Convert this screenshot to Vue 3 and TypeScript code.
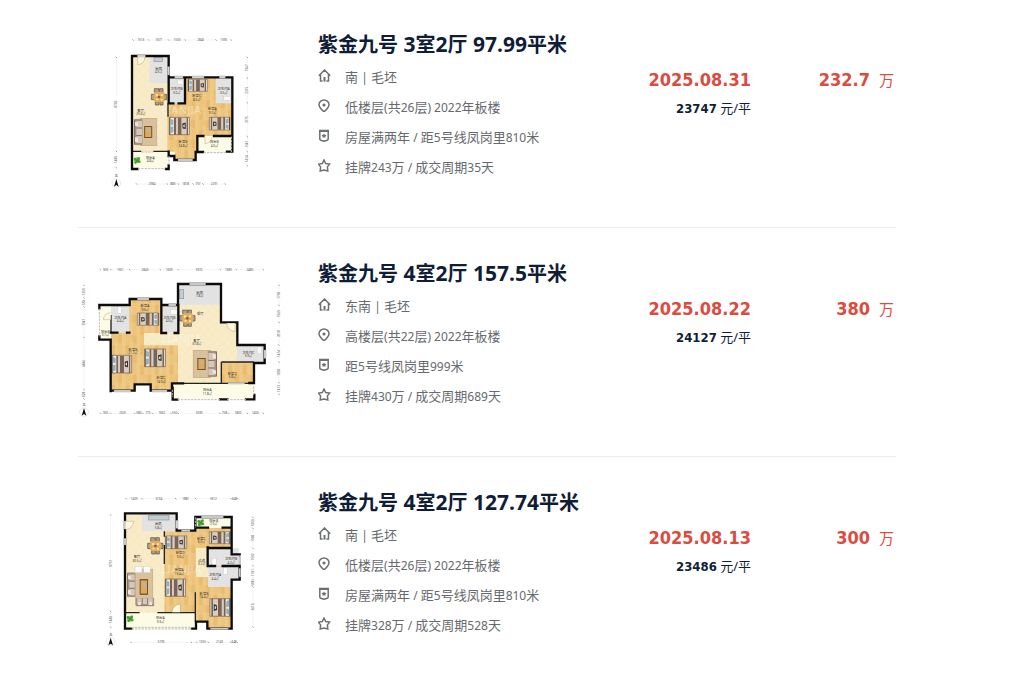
<script setup lang="ts">
type Box = [number, number, number, number]
type Placed = { x: number; y: number; w: number; h: number; turn?: number }
type Plan = {
  view: string
  floors: { kind: 'cream' | 'wood' | 'tile' | 'balcony'; d: string }[]
  walls: string
  thin: string
  windows: Box[]
  rails: string
  doors: string
  beds: Placed[]
  sofas: Placed[]
  rugs: Placed[]
  tables: { x: number; y: number }[]
  plants: { x: number; y: number }[]
  fixtures: Box[]
  stove: Box
  rooms: { x: number; y: number; name: string; area: string }[]
  top: { y: number; marks: number[]; text: string[] }
  bottom: { y: number; marks: number[]; text: string[] }
  left: { x: number; marks: number[]; text: string[] }
  right: { x: number; marks: number[]; text: string[] }
  compass: { x: number; y: number }
  brand: { x: number; y: number }
}
type Listing = {
  title: string
  facing: string
  floor: string
  place: string
  deal: string
  date: string
  unit: string
  price: string
  plan: Plan
}

const listings: Listing[] = [
  {
    title: '紫金九号 3室2厅 97.99平米',
    facing: '南 | 毛坯',
    floor: '低楼层(共26层) 2022年板楼',
    place: '房屋满两年 / 距5号线凤岗里810米',
    deal: '挂牌243万 / 成交周期35天',
    date: '2025.08.31',
    unit: '23747',
    price: '232.7',
    plan: {
      view: '0 21 660 510',
      floors: [
        { kind: 'cream', d: 'M162 108H272V395H162Z' },
        { kind: 'tile', d: 'M215 110H270V190H215Z' },
        { kind: 'wood', d: 'M270 172H462V348H360V395H352V420H290V395H268V250H270Z' },
        { kind: 'tile', d: 'M273 174H321V250H273ZM413 174H462V250H413Z' },
        { kind: 'balcony', d: 'M162 396H272V445H162ZM360 349H462V398H360Z' },
      ],
      walls: 'M178 447H162V108H272V172H463V395H447M272 395V408H289V420H353V396H375M272 436V447H264M321 174V250H302M286 250H272V174M358 396V348H376M408 348H462',
      thin: 'M162 394H190M226 394H272M270 250V290',
      windows: [[178, 105, 24, 7], [268, 140, 7, 25], [290, 168, 25, 7], [342, 168, 36, 7], [424, 168, 18, 7], [300, 417, 44, 6]],
      rails: 'M180 446H262M377 398H447M273 408V434M460 350V396M190 396H226',
      doors: 'M179 112V134Q199 132 201 112M381 350V371Q400 369 403 350',
      beds: [
        { x: 274, y: 292, w: 60, h: 52 },
        { x: 330, y: 178, w: 58, h: 36 },
        { x: 456, y: 330, w: 62, h: 38, turn: 180 },
      ],
      sofas: [{ x: 168, y: 296, w: 26, h: 80 }],
      rugs: [{ x: 185, y: 294, w: 53, h: 84 }],
      tables: [{ x: 243, y: 231 }],
      plants: [{ x: 177, y: 421 }],
      fixtures: [[298, 180, 17, 14], [437, 229, 21, 12]],
      stove: [228, 113, 25, 12],
      rooms: [
        { x: 242, y: 149, name: '厨房', area: '4.5㎡' },
        { x: 296, y: 211, name: '卫生间B', area: '3.0㎡' },
        { x: 356, y: 231, name: '卧室C', area: '8.3㎡' },
        { x: 437, y: 211, name: '卫生间A', area: '3.5㎡' },
        { x: 403, y: 270, name: '卧室A', area: '9.7㎡' },
        { x: 188, y: 275, name: '客厅', area: '25.6㎡' },
        { x: 315, y: 370, name: '卧室B', area: '14.8㎡' },
        { x: 409, y: 369, name: '阳台B', area: '4.0㎡' },
        { x: 217, y: 416, name: '阳台A', area: '4.8㎡' },
      ],
      top: { y: 60, marks: [165, 212, 272, 322, 414, 460], text: ['1513', '1677', '1503', '2840', '1390'] },
      bottom: { y: 492, marks: [176, 268, 301, 345, 375, 442], text: ['2984', '883', '1818', '757', '2291'] },
      left: { x: 115, marks: [112, 394, 443], text: ['8750', '1480'] },
      right: { x: 508, marks: [112, 174, 248, 350, 395, 437], text: ['1967', '2315', '3175', '1341', '1414'] },
      compass: { x: 115, y: 489 },
      brand: { x: 310, y: 283 },
    },
  },
  {
    title: '紫金九号 4室2厅 157.5平米',
    facing: '东南 | 毛坯',
    floor: '高楼层(共22层) 2022年板楼',
    place: '距5号线凤岗里999米',
    deal: '挂牌430万 / 成交周期689天',
    date: '2025.08.22',
    unit: '24127',
    price: '380',
    plan: {
      view: '0 3 660 510',
      floors: [
        { kind: 'wood', d: 'M98 152H155V132H250V234H302V407H218V388H170V408H98Z' },
        { kind: 'cream', d: 'M198 234H300V86H430V202H477V321H430V384H300V271H198Z' },
        { kind: 'tile', d: 'M302 88H427V149H302ZM98 153H154V233H98ZM250 153H300V233H250ZM477 270H558V321H477Z' },
        { kind: 'wood', d: 'M430 321H528V384H430Z' },
        { kind: 'balcony', d: 'M284 385H530V431H284ZM64 150H99V250H64Z' },
      ],
      walls: 'M98 408V254H64V244M64 160V150H155V132H250V150H300V87H429V202H478V270H560V324H528V384H514M98 407H170V388H218V407H282V385H315M284 398V434H298M426 433H448M504 433H529V420M99 233H118M147 233H154M250 150V234H264M290 234H301V150',
      thin: 'M99 180V235M430 321H528M430 321V384M315 385H514M528 321V384',
      windows: [[178, 129, 35, 6], [272, 147, 22, 6], [335, 84, 48, 6], [108, 405, 50, 6], [222, 405, 45, 6], [558, 285, 6, 25], [450, 382, 50, 5]],
      rails: 'M299 434H426M447 434H504M64 161V244M527 394V420M283 404V426',
      doors: 'M98 194H76Q78 174 98 173M471 205V230Q449 227 446 205',
      beds: [
        { x: 101, y: 301, w: 60, h: 53 },
        { x: 200, y: 282, w: 62, h: 53 },
        { x: 242, y: 211, w: 64, h: 37, turn: 180 },
      ],
      sofas: [{ x: 417, y: 367, w: 28, h: 80, turn: 180 }],
      rugs: [{ x: 344, y: 285, w: 55, h: 84 }],
      tables: [{ x: 328, y: 190 }],
      plants: [],
      fixtures: [[118, 155, 12, 21], [277, 163, 20, 15], [538, 276, 13, 20]],
      stove: [304, 104, 13, 27],
      rooms: [
        { x: 365, y: 116, name: '厨房', area: '7.8㎡' },
        { x: 201, y: 156, name: '卧室A', area: '9.6㎡' },
        { x: 127, y: 191, name: '卫生间A', area: '4.4㎡' },
        { x: 274, y: 191, name: '卫生间B', area: '4.0㎡' },
        { x: 367, y: 180, name: '餐厅', area: '' },
        { x: 82, y: 233, name: '阳台B', area: '3.7㎡' },
        { x: 356, y: 260, name: '客厅', area: '37.8㎡' },
        { x: 165, y: 287, name: '卧室B', area: '21.2㎡' },
        { x: 249, y: 373, name: '卧室C', area: '14.9㎡' },
        { x: 511, y: 296, name: '卫生间C', area: '3.9㎡' },
        { x: 463, y: 359, name: '卧室D', area: '5.8㎡' },
        { x: 388, y: 408, name: '阳台A', area: '11.8㎡' },
      ],
      top: { y: 44, marks: [67, 99, 155, 247, 300, 427, 475, 556], text: ['903', '1561', '2843', '1609', '3972', '1389', '2480'] },
      bottom: { y: 475, marks: [68, 98, 170, 195, 224, 279, 301, 426, 452, 508, 556], text: ['905', '2025', '580', '775', '1662', '550', '3939', '758', '1800', '1400'] },
      left: { x: 18, marks: [91, 129, 156, 247, 404, 432], text: ['1259', '559', '2947', '4846', '828'] },
      right: { x: 603, marks: [91, 151, 202, 270, 321, 383, 418], text: ['1790', '1569', '2018', '1414', '1890', '1413'] },
      compass: { x: 18, y: 471 },
      brand: { x: 310, y: 264 },
    },
  },
  {
    title: '紫金九号 4室2厅 127.74平米',
    facing: '南 | 毛坯',
    floor: '低楼层(共26层) 2022年板楼',
    place: '房屋满两年 / 距5号线凤岗里810米',
    deal: '挂牌328万 / 成交周期528天',
    date: '2025.08.13',
    unit: '23486',
    price: '300',
    plan: {
      view: '0 0 660 510',
      floors: [
        { kind: 'cream', d: 'M141 88H297V138H259V384H141Z' },
        { kind: 'tile', d: 'M192 90H296V138H192Z' },
        { kind: 'wood', d: 'M259 139H356V128H460V430H390V410H354V384H259Z' },
        { kind: 'cream', d: 'M354 189H391V276H354Z' },
        { kind: 'tile', d: 'M390 190H482V244H390ZM390 246H482V284H460V306H390Z' },
        { kind: 'balcony', d: 'M144 383H352V431H144ZM356 97H460V129H356Z' },
      ],
      walls: 'M160 431H141V85H296V137H352V96H461V208H485M485 242V284H461V431H388V410H354V431H342M389 189H461M389 187V243H411M434 243H482M357 128H390M434 128H460',
      thin: 'M141 383H185M238 383H352M259 139V155M259 180V237M352 322V410',
      windows: [[138, 108, 6, 24], [138, 160, 6, 20], [293, 106, 7, 24], [310, 134, 26, 6], [370, 93, 66, 6], [483, 214, 5, 24], [483, 250, 5, 26], [397, 429, 54, 5]],
      rails: 'M161 432H342M160 427H342M353 97V128',
      doors: 'M143 109H167Q164 132 143 134M307 382V357Q284 360 282 382',
      beds: [
        { x: 263, y: 153, w: 63, h: 38 },
        { x: 262, y: 282, w: 60, h: 52 },
        { x: 457, y: 176, w: 63, h: 36, turn: 180 },
        { x: 457, y: 394, w: 61, h: 53, turn: 180 },
      ],
      sofas: [
        { x: 147, y: 262, w: 25, h: 75 },
        { x: 173, y: 364, w: 26, h: 56, turn: -90 },
      ],
      rugs: [{ x: 171, y: 251, w: 55, h: 110 }],
      tables: [{ x: 232, y: 183 }],
      plants: [{ x: 156, y: 401 }, { x: 368, y: 113 }],
      fixtures: [[402, 220, 13, 23], [436, 248, 12, 20], [171, 244, 21, 19], [197, 244, 20, 19]],
      stove: [212, 91, 61, 14],
      rooms: [
        { x: 241, y: 121, name: '厨房', area: '5.8㎡' },
        { x: 407, y: 110, name: '阳台B', area: '2.9㎡' },
        { x: 307, y: 207, name: '卧室D', area: '9.3㎡' },
        { x: 370, y: 164, name: '卧室C', area: '6.7㎡' },
        { x: 177, y: 220, name: '客厅', area: '30.5㎡' },
        { x: 304, y: 259, name: '卧室A', area: '13.4㎡' },
        { x: 371, y: 230, name: '过道', area: '3.2㎡' },
        { x: 459, y: 225, name: '卫生间B', area: '4.2㎡' },
        { x: 411, y: 273, name: '卫生间A', area: '4.4㎡' },
        { x: 378, y: 329, name: '卧室B', area: '14.4㎡' },
        { x: 247, y: 402, name: '阳台A', area: '9.3㎡' },
      ],
      top: { y: 41, marks: [144, 192, 293, 353, 459, 480], text: ['1439', '3134', '1881', '3312', '648'] },
      bottom: { y: 472, marks: [159, 340, 356, 391, 458, 478], text: ['5790', '', '1055', '2149', '648'] },
      left: { x: 98, marks: [90, 380, 427], text: ['8751', '1440'] },
      right: { x: 525, marks: [97, 130, 190, 242, 283, 306, 426], text: ['1050', '1900', '1592', '1391', '588', '3610'] },
      compass: { x: 98, y: 470 },
      brand: { x: 310, y: 265 },
    },
  },
]

const textParts = (text: string): string[] => text.split(/([\x20-\x7e]+)/).filter(Boolean)
const isLatin = (part: string): boolean => /^[\x20-\x7e]+$/.test(part)
const facts = (item: Listing): { icon: string; text: string }[] => [
  { icon: 'home', text: item.facing },
  { icon: 'pin', text: item.floor },
  { icon: 'shield', text: item.place },
  { icon: 'star', text: item.deal },
]
const place = (item: Placed, w: number, h: number): string =>
  `translate(${item.x} ${item.y}) rotate(${item.turn ?? 0}) scale(${item.w / w} ${item.h / h})`
const middle = (marks: number[], i: number): number => (marks[i] + marks[i + 1]) / 2
</script>

<template>
  <svg class="defs" aria-hidden="true">
    <defs>
      <pattern id="wood" width="44" height="60" patternUnits="userSpaceOnUse">
        <rect width="44" height="60" fill="#ecc47c" />
        <path d="M0 0H11V60H0ZM22 20H33V60H22Z" fill="#efca87" />
        <path d="M11 30H22V60H11ZM33 0H44V24H33Z" fill="#e8bb6e" />
      </pattern>
      <pattern id="cream" width="28" height="28" patternUnits="userSpaceOnUse">
        <rect width="28" height="28" fill="#f8ebc8" />
        <path d="M0 0L14 14L28 0M0 28L14 14L28 28" fill="none" stroke="#f5e5b8" stroke-width="2" />
      </pattern>
      <pattern id="tile" width="12" height="12" patternUnits="userSpaceOnUse">
        <rect width="12" height="12" fill="#e3e3e3" />
        <path d="M0 0H12M0 0V12" stroke="#d9d9d9" />
      </pattern>
      <symbol id="bed" viewBox="0 0 60 50" preserveAspectRatio="none" overflow="visible">
        <rect width="60" height="50" fill="#efe8df" />
        <path d="M0 0H3V50H0Z" fill="#5b463a" />
        <path d="M14 1H20V50H14ZM25 1H37V50H25ZM51 1H56V50H51Z" fill="#7b6455" />
        <path d="M20 1H25V50H20ZM37 1H51V50H37Z" fill="#d9cdbf" />
        <path d="M4 4L12 8V22L4 21ZM4 28L12 26V42L4 46Z" fill="#90b0bd" />
        <path d="M39 18L49 15V34L40 32Z" fill="#35302c" />
        <path d="M42 22L46 20V29L42 28Z" fill="#eee5d9" />
        <path d="M0 0H60V50H0Z" fill="none" stroke="#6f5b4d" stroke-width="2" />
      </symbol>
      <symbol id="sofa" viewBox="0 0 26 80" preserveAspectRatio="none">
        <rect width="26" height="80" rx="4" fill="#a39182" />
        <path d="M7 7H24V27H7ZM7 29H24V50H7ZM7 52H24V73H7Z" fill="#d5c8bb" />
        <path d="M3 9L12 12V22L3 21ZM3 55L12 58V70L3 70Z" fill="#eee6df" />
        <path d="M1 4V76M7 28H24M7 51H24" stroke="#6b574c" stroke-width="2" />
      </symbol>
      <symbol id="rug" viewBox="0 0 55 84" preserveAspectRatio="none">
        <rect width="55" height="84" fill="#cdb18a" />
        <path d="M3 3H52V81H3Z" fill="#d8c19e" />
        <rect x="14" y="24" width="25" height="36" fill="#755020" />
        <rect x="17" y="27" width="19" height="30" fill="#e0a95a" />
        <path d="M23 32H32V43H25Z" fill="#a5bcbd" />
      </symbol>
      <symbol id="dining" viewBox="-26 -27 52 54">
        <path d="M-14 -25H0V-14H-14ZM2 -25H12V-14H2ZM-11 14H0V24H-11ZM3 14H12V24H3ZM-23 -8H-13V8H-23ZM14 -8H23V8H14Z" fill="#aba095" stroke="#55473c" stroke-width="2" />
        <rect x="-16" y="-16" width="33" height="32" rx="9" fill="#e3ac55" />
        <path d="M-10 -9H-3V-2H-10ZM5 -9H11V-3H5ZM-9 5H-2V10H-9ZM5 5H11V11H5Z" fill="#f5dfb5" />
        <circle r="4" fill="#786346" />
      </symbol>
      <symbol id="plant" viewBox="-12 -12 24 24">
        <circle r="9" fill="#7cc055" />
        <path d="M0 -2Q-8 -13 -10 -4Q-11 0 -3 1Q-13 8 -4 11Q0 10 1 3Q9 12 11 5Q12 0 4 0Q13 -5 7 -10Q2 -12 0 -2" fill="#4aa334" />
        <path d="M-8 -6L7 7M7 -7L-6 8" stroke="#287921" stroke-width="1" />
      </symbol>
    </defs>
  </svg>

  <main class="list">
    <article v-for="item in listings" :key="item.date" class="item">
      <svg class="plan" :viewBox="item.plan.view" role="img" :aria-label="item.title">
        <path v-for="floor in item.plan.floors" :key="floor.d" :d="floor.d" :class="floor.kind" />
        <use v-for="(r, i) in item.plan.rugs" :key="'r' + i" href="#rug" width="55" height="84" :transform="place(r, 55, 84)" />
        <use v-for="(b, i) in item.plan.beds" :key="'b' + i" href="#bed" width="60" height="50" :transform="place(b, 60, 50)" />
        <use v-for="(s, i) in item.plan.sofas" :key="'s' + i" href="#sofa" width="26" height="80" :transform="place(s, 26, 80)" />
        <use v-for="(t, i) in item.plan.tables" :key="'t' + i" href="#dining" :x="t.x - 26" :y="t.y - 27" width="52" height="54" />
        <use v-for="(p, i) in item.plan.plants" :key="'p' + i" href="#plant" :x="p.x - 12" :y="p.y - 12" width="24" height="24" />
        <rect v-for="(f, i) in item.plan.fixtures" :key="'f' + i" :x="f[0]" :y="f[1]" :width="f[2]" :height="f[3]" class="fixture" />
        <rect :x="item.plan.stove[0]" :y="item.plan.stove[1]" :width="item.plan.stove[2]" :height="item.plan.stove[3]" class="stove" />
        <text :x="item.plan.brand.x" :y="item.plan.brand.y" class="brand">LIANJIA</text>
        <path :d="item.plan.thin" class="thin" />
        <path :d="item.plan.walls" class="wall" />
        <rect v-for="(w, i) in item.plan.windows" :key="'w' + i" :x="w[0]" :y="w[1]" :width="w[2]" :height="w[3]" class="window" />
        <path :d="item.plan.rails" class="rail" />
        <path :d="item.plan.doors" class="door" />
        <g v-for="room in item.plan.rooms" :key="room.name" class="room">
          <text :x="room.x" :y="room.y">{{ room.name }}</text>
          <text v-if="room.area" :x="room.x" :y="room.y + 11" class="area">{{ room.area }}</text>
        </g>
        <g v-for="(edge, e) in [item.plan.top, item.plan.bottom]" :key="'h' + e" class="size">
          <path :d="`M${edge.marks[0]} ${edge.y}H${edge.marks[edge.marks.length - 1]}`" />
          <path v-for="m in edge.marks" :key="m" :d="`M${m - 2} ${edge.y - 2}L${m + 2} ${edge.y + 2}`" class="tick" />
          <text v-for="(t, i) in edge.text" :key="i" :x="middle(edge.marks, i)" :y="edge.y + 3">{{ t }}</text>
        </g>
        <g v-for="(edge, e) in [item.plan.left, item.plan.right]" :key="'v' + e" class="size">
          <path :d="`M${edge.x} ${edge.marks[0]}V${edge.marks[edge.marks.length - 1]}`" />
          <path v-for="m in edge.marks" :key="m" :d="`M${edge.x - 2} ${m - 2}L${edge.x + 2} ${m + 2}`" class="tick" />
          <text v-for="(t, i) in edge.text" :key="i" :transform="`translate(${edge.x + 3} ${middle(edge.marks, i)}) rotate(-90)`">{{ t }}</text>
        </g>
        <g :transform="`translate(${item.plan.compass.x} ${item.plan.compass.y})`">
          <circle r="13" fill="#fff" stroke="#bbb" />
          <path d="M0 -12L7 11L0 6L-7 11Z" fill="#111" />
          <text y="-18" class="north">北</text>
        </g>
      </svg>

      <section class="info">
        <h2 class="title">
          <a href="#"><span v-for="(part, i) in textParts(item.title)" :key="i" :class="{ latin: isLatin(part) }">{{ part }}</span></a>
        </h2>
        <ul class="facts">
          <li v-for="fact in facts(item)" :key="fact.icon">
            <svg class="icon" viewBox="0 0 13 13" aria-hidden="true">
              <template v-if="fact.icon === 'home'">
                <path d="M0.8 6.8L6.5 1L12.2 6.8M2.5 5.4V12M10.5 5.4V12M1.8 12H4.6M8.4 12H11.2" />
                <path d="M6.5 8V12.6" class="bar" />
              </template>
              <template v-else-if="fact.icon === 'pin'">
                <path d="M6 12.8Q1 8.6 1 5.8A5 4.8 0 0 1 11 5.8Q11 8.6 6 12.8Z" />
                <circle cx="6" cy="6" r="1.6" class="dot" />
              </template>
              <template v-else-if="fact.icon === 'shield'">
                <path d="M1.8 1.6H10.2V10Q10.2 11 9.2 11.3L6 12.3L2.8 11.3Q1.8 11 1.8 10Z" />
                <path d="M1.1 2H10.9" class="bar" />
                <path d="M6 4.4L6.8 5.7L8.5 6L7.4 7.2L7.6 8.8L6 8.2L4.4 8.8L4.6 7.2L3.5 6L5.2 5.7Z" class="dot" />
              </template>
              <path v-else d="M6 1L7.7 4.6L11.6 5.1L9.4 7.9L9.8 12L6 11L2.2 12L2.6 7.9L0.4 5.1L4.3 4.6Z" />
            </svg>
            <span class="text"><span v-for="(part, i) in textParts(fact.text)" :key="i" :class="{ latin: isLatin(part) }">{{ part }}</span></span>
          </li>
        </ul>
      </section>

      <section class="sale">
        <time class="date">{{ item.date }}</time>
        <p class="unit"><b>{{ item.unit }}</b> 元/平</p>
      </section>
      <p class="price"><b>{{ item.price }}</b><span>万</span></p>
    </article>
  </main>
</template>

<style>
body {
  background: #fff;
}
</style>

<style scoped>
.defs {
  position: absolute;
  width: 0;
  height: 0;
}
.list {
  padding: 0 116px 0 78px;
  font-family: "Noto Sans", "Noto Sans CJK SC", sans-serif;
}
.item {
  display: grid;
  grid-template-columns: 220px minmax(0, 1fr) 120px 145px;
  align-items: start;
  padding: 28px 0 30px;
  border-bottom: 1px solid #ededed;
}
.item:first-child {
  padding-top: 27px;
}
.item:last-child {
  border-bottom: 0;
  padding-bottom: 16px;
}
.plan {
  display: block;
  width: 220px;
  height: 170px;
}
.info {
  padding-left: 20px;
}
.title {
  margin: 0;
  font-size: 20px;
  line-height: 34px;
  font-weight: 700;
  white-space: nowrap;
}
.title a {
  color: #101d37;
  text-decoration: none;
}
.title span {
  white-space: pre;
}
.title .latin {
  font-size: 21px;
}
.facts {
  margin: 0;
  padding: 0;
  list-style: none;
  color: #66696d;
  font-size: 13px;
  line-height: 30px;
}
.facts li {
  display: flex;
  gap: 14px;
  height: 30px;
}
.text {
  white-space: pre;
}
.text .latin {
  font-size: 12px;
}
.icon {
  width: 13px;
  height: 13px;
  margin-top: 7px;
  flex: none;
  fill: none;
  stroke: #6d7072;
  stroke-width: 1.5;
}
.icon .dot {
  fill: #6d7072;
  stroke: none;
}
.icon .bar {
  stroke-width: 2;
}
.sale {
  padding-top: 39px;
  text-align: right;
  white-space: nowrap;
}
.date,
.price b {
  color: #db4c3f;
  font: 700 18px/28px "DejaVu Sans Condensed", "DejaVu Sans", sans-serif;
}
.date {
  display: block;
}
.unit {
  margin: 0;
  color: #101d37;
  font-size: 13px;
  line-height: 28px;
}
.unit b {
  font-family: "DejaVu Sans Condensed", "DejaVu Sans", sans-serif;
}
.price {
  display: flex;
  justify-content: flex-end;
  align-items: baseline;
  gap: 9px;
  margin: 0;
  padding: 39px 2px 0 0;
  color: #db4c3f;
  font-size: 15px;
  line-height: 28px;
}
.cream {
  fill: url(#cream);
}
.wood {
  fill: url(#wood);
}
.tile {
  fill: url(#tile);
}
.balcony {
  fill: #fcfce6;
}
.wall {
  fill: none;
  stroke: #0c0c0c;
  stroke-width: 7;
  stroke-linecap: square;
}
.thin {
  fill: none;
  stroke: #222;
  stroke-width: 4;
}
.window {
  fill: #d5d5d5;
  stroke: #8a8a8a;
}
.rail {
  fill: none;
  stroke: #bbb;
  stroke-width: 3;
  stroke-dasharray: 7 3;
}
.door {
  fill: #fff8df;
  stroke: #8c8169;
  stroke-width: 1;
}
.fixture {
  fill: #fafafa;
  stroke: #bbb;
}
.stove {
  fill: #c3ccd2;
  stroke: #8b979e;
  stroke-width: 2;
}
.brand {
  fill: #fff;
  fill-opacity: 0.4;
  font-size: 34px;
  text-anchor: middle;
}
.room {
  fill: #3a352c;
  font-size: 10px;
  text-anchor: middle;
}
.room .area {
  font-size: 9px;
}
.size {
  fill: #555;
  font-size: 9px;
  text-anchor: middle;
}
.size path {
  fill: none;
  stroke: #ddd;
  stroke-width: 1;
}
.size .tick {
  stroke: #777;
  stroke-width: 2;
}
.north {
  fill: #222;
  font-size: 9px;
  text-anchor: middle;
}
</style>
